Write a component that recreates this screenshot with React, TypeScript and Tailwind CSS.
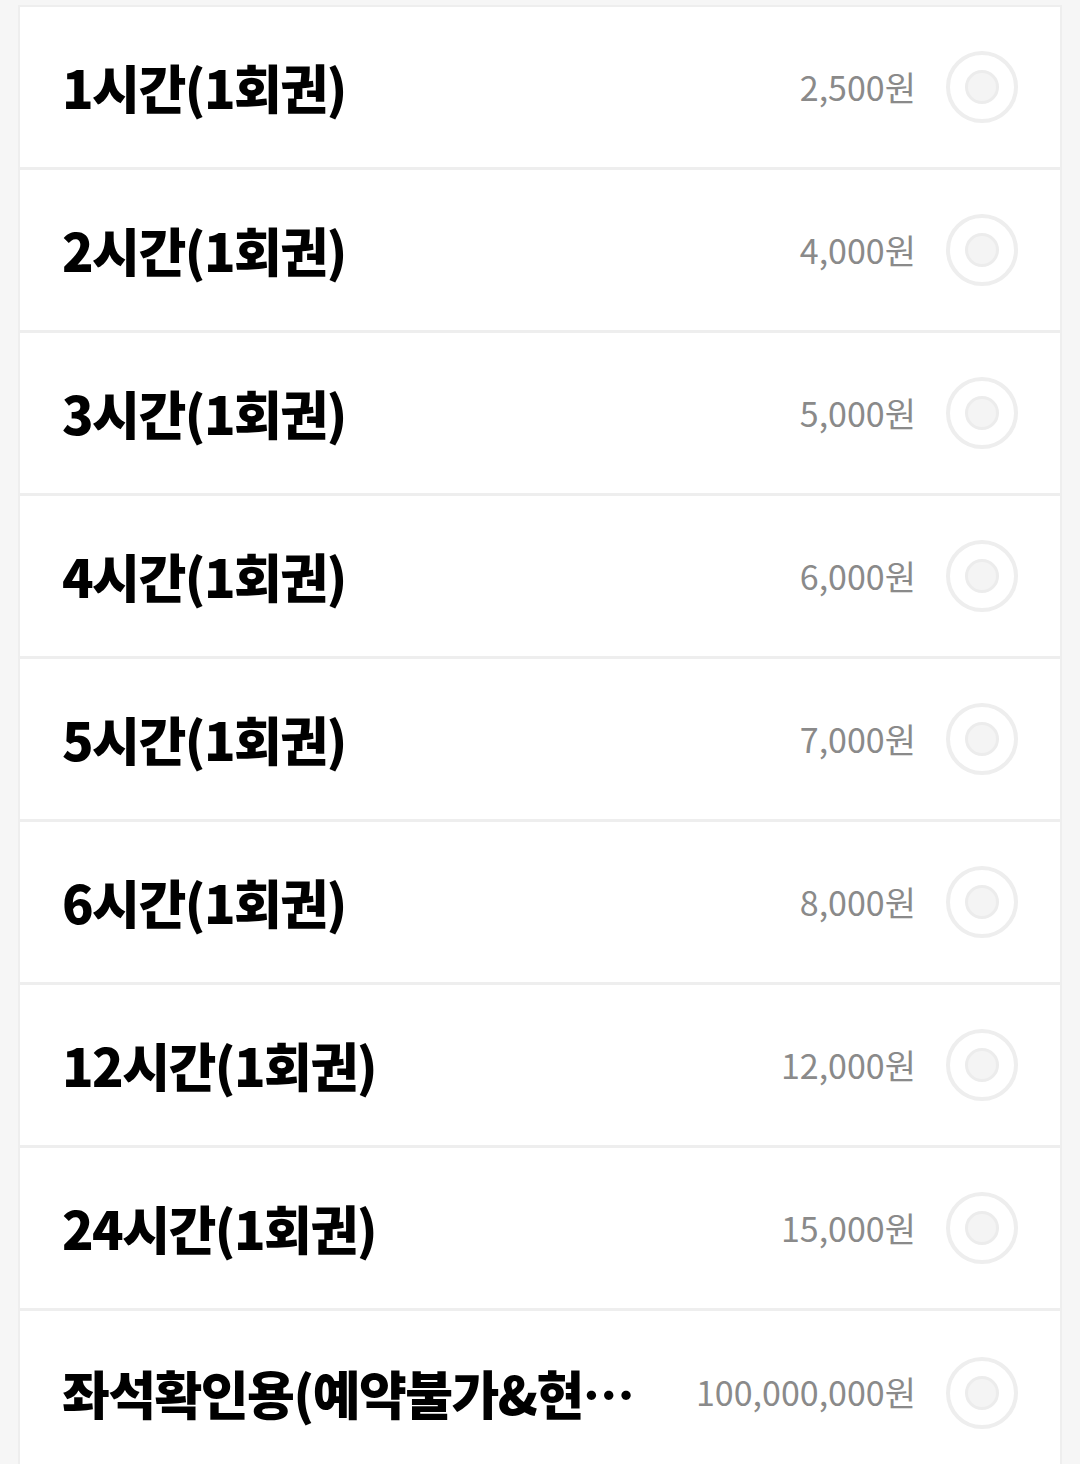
import React from 'react';

const items = [
  { name: '1시간(1회권)', price: '2,500원' },
  { name: '2시간(1회권)', price: '4,000원' },
  { name: '3시간(1회권)', price: '5,000원' },
  { name: '4시간(1회권)', price: '6,000원' },
  { name: '5시간(1회권)', price: '7,000원' },
  { name: '6시간(1회권)', price: '8,000원' },
  { name: '12시간(1회권)', price: '12,000원' },
  { name: '24시간(1회권)', price: '15,000원' },
  { name: '좌석확인용(예약불가&현장결제전용)', price: '100,000,000원' },
];

const Radio = () => (
  <div className="w-[72px] h-[72px] shrink-0 rounded-full border-[4px] border-[#eeeeee] flex items-center justify-center">
    <div className="w-[34px] h-[34px] rounded-full bg-[#f4f4f4] border-[3px] border-[#ececec]" />
  </div>
);

export default function App() {
  return (
    <div
      className="min-h-[1464px] bg-[#f6f6f6] pt-[5px] px-[18px]"
      style={{ fontFamily: '"Noto Sans CJK KR", "Noto Sans", sans-serif' }}
    >
      <div className="bg-white border-x-[2px] border-t-[2px] border-[#eeeeee]">
        {items.map((item, i) => (
          <div
            key={i}
            className={
              'h-[163px] flex items-center pl-[42px] pr-[42px] ' +
              (i < items.length - 1 ? 'border-b-[3px] border-[#eeeeee]' : '')
            }
          >
            <div className="flex-1 min-w-0 truncate py-[6px] text-[52px] font-black text-black tracking-[-0.03em] leading-[1.3]">
              {item.name}
            </div>
            <div className="ml-[56px] text-[34px] text-[#8a8a8a] leading-[1.3] shrink-0">{item.price}</div>
            <div className="ml-[30px]">
              <Radio />
            </div>
          </div>
        ))}
      </div>
    </div>
  );
}
